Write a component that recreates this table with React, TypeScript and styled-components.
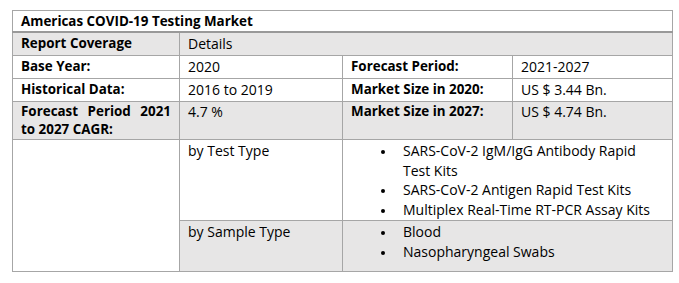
import styled, { createGlobalStyle } from "styled-components";

const GlobalStyle = createGlobalStyle`
  html, body {
    margin: 0;
    padding: 0;
    background: #ffffff;
  }
  body {
    font-family: "Open Sans", "Liberation Sans", sans-serif;
    color: #000000;
  }
`;

type Info = { label: string; value: string };

const leftRows: [Info, Info][] = [
  [
    { label: "Base Year:", value: "2020" },
    { label: "Forecast Period:", value: "2021-2027" },
  ],
  [
    { label: "Historical Data:", value: "2016 to 2019" },
    { label: "Market Size in 2020:", value: "US $ 3.44 Bn." },
  ],
];

const testTypes = [
  "SARS-CoV-2 IgM/IgG Antibody Rapid Test Kits",
  "SARS-CoV-2 Antigen Rapid Test Kits",
  "Multiplex Real-Time RT-PCR Assay Kits",
];

const sampleTypes = ["Blood", "Nasopharyngeal Swabs"];

export default function App() {
  return (
    <Page>
      <GlobalStyle />
      <Table>
        <colgroup>
          <col style={{ width: 167 }} />
          <col style={{ width: 163 }} />
          <col style={{ width: 170 }} />
          <col style={{ width: 160 }} />
        </colgroup>
        <tbody>
          <Row>
            <TitleCell colSpan={4}>Americas COVID-19 Testing Market</TitleCell>
          </Row>
          <Row shaded>
            <Cell bold>Report Coverage</Cell>
            <Cell colSpan={3}>Details</Cell>
          </Row>
          {leftRows.map(([a, b]) => (
            <Row key={a.label}>
              <Cell bold>{a.label}</Cell>
              <Cell>{a.value}</Cell>
              <Cell bold>{b.label}</Cell>
              <Cell>{b.value}</Cell>
            </Row>
          ))}
          <Row shaded>
            <Cell bold justify h={35}>
              Forecast Period 2021 to 2027 CAGR:
            </Cell>
            <Cell h={35}>4.7 %</Cell>
            <Cell bold h={35}>Market Size in 2027:</Cell>
            <Cell h={35}>US $ 4.74 Bn.</Cell>
          </Row>
          <Row>
            <BlankCell rowSpan={2} />
            <Cell h={78}>by Test Type</Cell>
            <Cell colSpan={2} h={78}>
              <Bullets>
                {testTypes.map((t) => (
                  <Item key={t}>
                    <Dot />
                    <span>{t}</span>
                  </Item>
                ))}
              </Bullets>
            </Cell>
          </Row>
          <Row shaded>
            <Cell h={48}>by Sample Type</Cell>
            <Cell colSpan={2} h={48}>
              <Bullets>
                {sampleTypes.map((t) => (
                  <Item key={t}>
                    <Dot />
                    <span>{t}</span>
                  </Item>
                ))}
              </Bullets>
            </Cell>
          </Row>
        </tbody>
      </Table>
    </Page>
  );
}

const Page = styled.div`
  padding: 10px 0 0 12px;
`;

const Table = styled.table`
  border-collapse: collapse;
  table-layout: fixed;
  width: 660px;
  font-size: 14px;
  line-height: 19px;
  border: 1px solid #a6a6a6;
`;

const Row = styled.tr<{ shaded?: boolean }>`
  background: ${({ shaded }) => (shaded ? "#e7e6e6" : "#ffffff")};
`;

const Cell = styled.td<{ bold?: boolean; justify?: boolean; h?: number }>`
  border: 1px solid #a6a6a6;
  padding: 1px 8px 1px 8px;
  height: ${({ h }) => h ?? 20}px;
  vertical-align: top;
  font-weight: ${({ bold }) => (bold ? 700 : 400)};
  font-size: ${({ bold }) => (bold ? "13.4px" : "14px")};
  line-height: ${({ h }) => (h === 35 ? "17.5px" : "19px")};
  text-align: ${({ justify }) => (justify ? "justify" : "left")};
`;

const TitleCell = styled.td`
  border: 1px solid #a6a6a6;
  border-bottom: 2px solid #999999;
  padding: 1px 8px 0 8px;
  height: 19px;
  font-size: 13.4px;
  font-weight: 700;
  vertical-align: top;
  background: #ffffff;
`;

const BlankCell = styled.td`
  border: 1px solid #a6a6a6;
  background: #ffffff;
`;

const Bullets = styled.ul`
  list-style: none;
  margin: 0;
  padding: 0 0 0 30px;
  line-height: 19.5px;
`;

const Item = styled.li`
  display: flex;
  align-items: flex-start;
`;

const Dot = styled.span`
  flex: 0 0 22px;
  height: 19px;
  position: relative;

  &::before {
    content: "";
    position: absolute;
    left: 0;
    top: 9px;
    width: 4px;
    height: 4px;
    border-radius: 50%;
    background: #000000;
  }
`;
